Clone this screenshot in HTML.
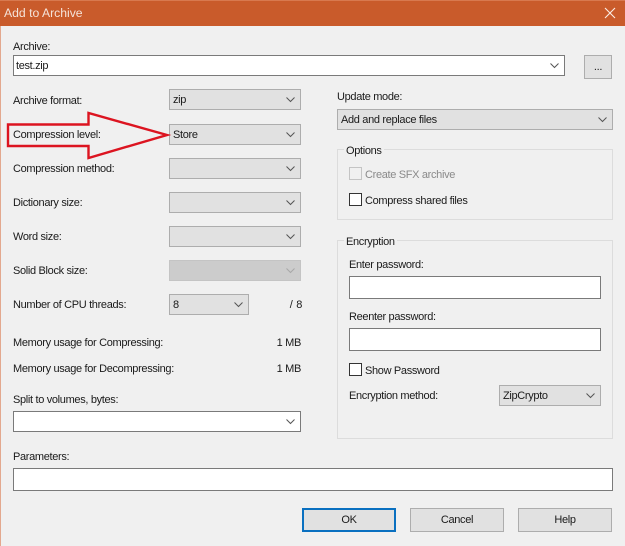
<!DOCTYPE html>
<html><head><meta charset="utf-8"><style>
html,body{margin:0;padding:0}
body{width:625px;height:546px;overflow:hidden;background:#f0f0f0;position:relative;font-family:"Liberation Sans",sans-serif;font-size:11px;letter-spacing:-.33px;color:#1a1a1a}
.a,.t,.c,.i,.g,.k,.b{position:absolute;box-sizing:border-box}
.t{white-space:nowrap;line-height:16px;height:16px;margin-top:1px}
.c{background:#e1e1e1;border:1px solid #adadad;line-height:21px;padding-left:3px}
.w{background:#fff;border-color:#7a7a7a}
.d{background:#cccccc;border-color:#c4c4c4}
.c svg{position:absolute;right:4px;top:7px}
.i{background:#fff;border:1px solid #7a7a7a}
.g{border:1px solid #dcdcdc}
.k{width:13px;height:13px;border:1px solid #333;background:#fff}
.b{background:#e1e1e1;border:1px solid #adadad;text-align:center;line-height:22px}
</style></head><body>
<div class="a" style="left:0;top:0;width:625px;height:26px;background:#c95b2b;border-top:1px solid #d8794f"></div>
<div class="a" style="left:0;top:26px;width:1px;height:520px;background:#e3a88e"></div>
<div class="t" style="left:4px;top:4px;color:#f5e3d9;font-size:12.2px;letter-spacing:0">Add to Archive</div>
<svg class="a" style="left:604px;top:7px" width="12" height="12"><path d="M1 1L11 11M11 1L1 11" stroke="#fbeee7" stroke-width="1.1" fill="none"/></svg>

<div class="t" style="left:13px;top:38px">Archive:</div>
<div class="c w" style="left:13px;top:55px;width:552px;height:21px;padding-left:2px;line-height:20px">test.zip<svg width="10" height="6"><path d="M.5 .5L4.500 4.500L8.500 .5" stroke="#555" fill="none"/></svg></div>
<div class="b" style="left:584px;top:55px;width:28px;height:24px">...</div>

<div class="t" style="left:13px;top:92px">Archive format:</div>
<div class="c" style="left:169px;top:89px;width:132px;height:21px">zip<svg width="10" height="6"><path d="M.5 .5L4.500 4.500L8.500 .5" stroke="#555" fill="none"/></svg></div>
<div class="t" style="left:13px;top:126px">Compression level:</div>
<div class="c" style="left:169px;top:124px;width:132px;height:21px">Store<svg width="10" height="6"><path d="M.5 .5L4.500 4.500L8.500 .5" stroke="#555" fill="none"/></svg></div>
<div class="t" style="left:13px;top:160px">Compression method:</div>
<div class="c" style="left:169px;top:158px;width:132px;height:21px"><svg width="10" height="6"><path d="M.5 .5L4.500 4.500L8.500 .5" stroke="#555" fill="none"/></svg></div>
<div class="t" style="left:13px;top:194px">Dictionary size:</div>
<div class="c" style="left:169px;top:192px;width:132px;height:21px"><svg width="10" height="6"><path d="M.5 .5L4.500 4.500L8.500 .5" stroke="#555" fill="none"/></svg></div>
<div class="t" style="left:13px;top:228px">Word size:</div>
<div class="c" style="left:169px;top:226px;width:132px;height:21px"><svg width="10" height="6"><path d="M.5 .5L4.500 4.500L8.500 .5" stroke="#555" fill="none"/></svg></div>
<div class="t" style="left:13px;top:262px">Solid Block size:</div>
<div class="c d" style="left:169px;top:260px;width:132px;height:21px"><svg width="10" height="6"><path d="M.5 .5L4.500 4.500L8.500 .5" stroke="#a8a8a8" fill="none"/></svg></div>
<div class="t" style="left:13px;top:296px">Number of CPU threads:</div>
<div class="c" style="left:169px;top:294px;width:80px;height:21px">8<svg width="10" height="6"><path d="M.5 .5L4.500 4.500L8.500 .5" stroke="#555" fill="none"/></svg></div>
<div class="t" style="right:323px;top:296px;word-spacing:1px">/ 8</div>
<div class="t" style="left:13px;top:334px">Memory usage for Compressing:</div>
<div class="t" style="right:324px;top:334px">1 MB</div>
<div class="t" style="left:13px;top:360px">Memory usage for Decompressing:</div>
<div class="t" style="right:324px;top:360px">1 MB</div>
<div class="t" style="left:13px;top:391px">Split to volumes, bytes:</div>
<div class="c w" style="left:13px;top:411px;width:288px;height:21px"><svg width="10" height="6"><path d="M.5 .5L4.500 4.500L8.500 .5" stroke="#555" fill="none"/></svg></div>
<div class="t" style="left:13px;top:448px">Parameters:</div>
<div class="i" style="left:13px;top:468px;width:600px;height:23px"></div>

<div class="t" style="left:337px;top:88px">Update mode:</div>
<div class="c" style="left:337px;top:109px;width:276px;height:21px">Add and replace files<svg width="10" height="6"><path d="M.5 .5L4.500 4.500L8.500 .5" stroke="#555" fill="none"/></svg></div>

<div class="g" style="left:337px;top:149px;width:276px;height:71px"></div>
<div class="t" style="left:344px;top:142px;background:#f0f0f0;padding:0 2px">Options</div>
<div class="k" style="left:349px;top:167px;border-color:#c4c4c4;background:#f0f0f0"></div>
<div class="t" style="left:365px;top:166px;color:#8a8a8a">Create SFX archive</div>
<div class="k" style="left:349px;top:193px"></div>
<div class="t" style="left:365px;top:192px">Compress shared files</div>

<div class="g" style="left:337px;top:240px;width:276px;height:199px"></div>
<div class="t" style="left:344px;top:233px;background:#f0f0f0;padding:0 2px">Encryption</div>
<div class="t" style="left:349px;top:256px">Enter password:</div>
<div class="i" style="left:349px;top:276px;width:252px;height:23px"></div>
<div class="t" style="left:349px;top:308px">Reenter password:</div>
<div class="i" style="left:349px;top:328px;width:252px;height:23px"></div>
<div class="k" style="left:349px;top:363px"></div>
<div class="t" style="left:365px;top:362px">Show Password</div>
<div class="t" style="left:349px;top:387px">Encryption method:</div>
<div class="c" style="left:499px;top:385px;width:102px;height:21px">ZipCrypto<svg width="10" height="6"><path d="M.5 .5L4.500 4.500L8.500 .5" stroke="#555" fill="none"/></svg></div>

<div class="b" style="left:302px;top:508px;width:94px;height:24px;border:2px solid #0a70c0;line-height:20px">OK</div>
<div class="b" style="left:410px;top:508px;width:94px;height:24px">Cancel</div>
<div class="b" style="left:518px;top:508px;width:94px;height:24px">Help</div>

<svg class="a" style="left:0;top:100px" width="180" height="70"><path d="M8 24.500H88.500V13L167 35L88.500 58V46H8Z" fill="none" stroke="#dc1420" stroke-width="2.400"/></svg>
</body></html>
